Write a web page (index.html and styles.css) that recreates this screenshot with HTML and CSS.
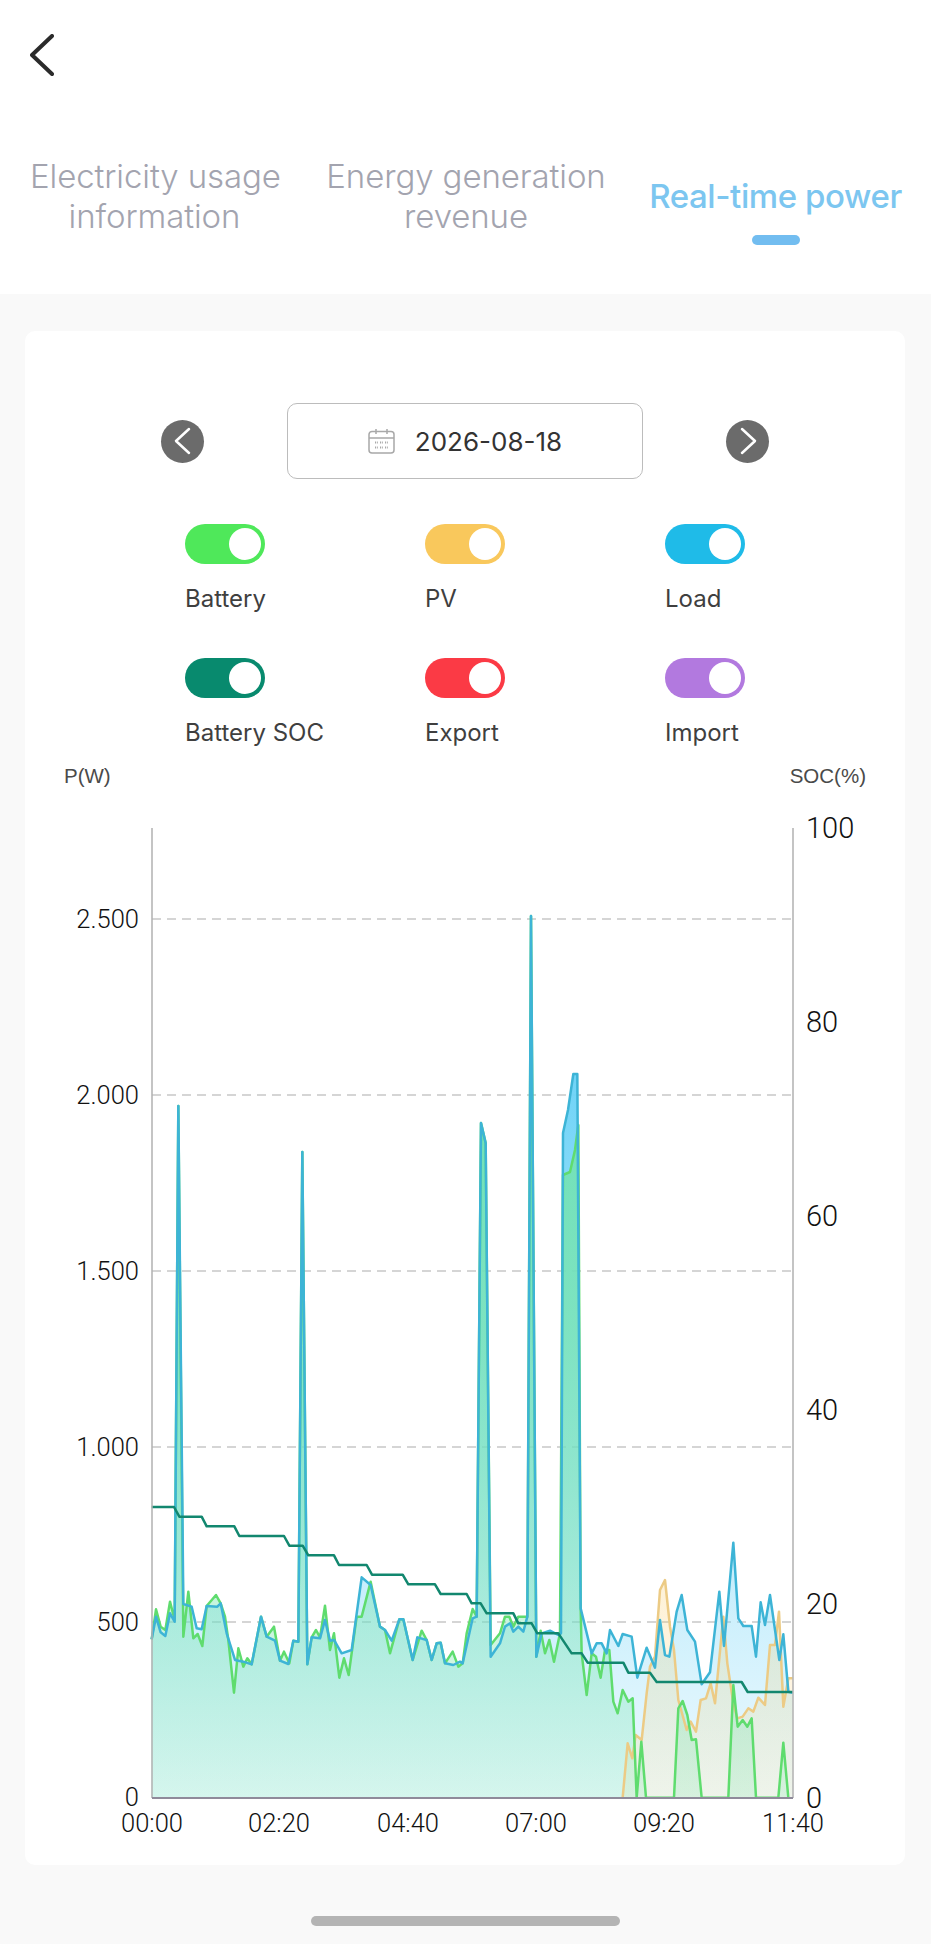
FILE: index.html
```html
<!DOCTYPE html>
<html lang="en">
<head>
  <meta charset="UTF-8" />
  <meta name="viewport" content="width=device-width, initial-scale=1.0" />
  <title>Real-time power</title>
  <link rel="stylesheet" href="styles.css">
</head>
<body>
  <header class="top">
    <a class="back" href="#">
      <svg width="24" height="42" viewBox="0 0 24 42"><path d="M22 2 L2 21 L22 40" /></svg>
    </a>
    <nav class="tabs">
      <div class="tab tab-first">Electricity usage<br>information</div>
      <div class="tab tab-second">Energy generation<br>revenue</div>
      <div class="tab active">Real-time power</div>
    </nav>
  </header>

  <main class="card">
    <div class="date-row">
      <button class="round">
        <svg width="20" height="28" viewBox="0 0 20 28"><path d="M16 2 L3 14 L16 26" /></svg>
      </button>
      <div class="date-box">
        <svg class="cal" width="27" height="26" viewBox="0 0 27 26">
          <rect x="1" y="3.5" width="25" height="21.5" rx="3" />
          <path d="M1 10 H26 M8 1 V6 M19 1 V6" />
          <path class="dots" d="M7 14.5 H10 M12 14.5 H15 M17 14.5 H20 M7 19.5 H10 M12 19.5 H15 M17 19.5 H20" />
        </svg>
        <span>2026-08-18</span>
      </div>
      <button class="round round-next">
        <svg width="20" height="28" viewBox="0 0 20 28"><path d="M4 2 L17 14 L4 26" /></svg>
      </button>
    </div>

    <div class="legend">
      <div class="legend-item"><span class="toggle battery"></span><label>Battery</label></div>
      <div class="legend-item"><span class="toggle pv"></span><label>PV</label></div>
      <div class="legend-item"><span class="toggle load"></span><label>Load</label></div>
      <div class="legend-item"><span class="toggle soc"></span><label>Battery SOC</label></div>
      <div class="legend-item"><span class="toggle export"></span><label>Export</label></div>
      <div class="legend-item"><span class="toggle import"></span><label>Import</label></div>
    </div>

    <div class="axis-titles">
      <span>P(W)</span>
      <span>SOC(%)</span>
    </div>

    <svg class="chart" width="880" height="1050" viewBox="0 0 880 1050">
      <defs>
        <linearGradient id="loadFill" gradientUnits="userSpaceOnUse" x1="0" y1="-1000" x2="0" y2="1193">
          <stop offset="0" stop-color="#6fd3f7" />
          <stop offset="0.8" stop-color="#6fd3f7" stop-opacity="0.3" />
          <stop offset="1" stop-color="#6fd3f7" stop-opacity="0.12" />
        </linearGradient>
        <linearGradient id="pvFill" gradientUnits="userSpaceOnUse" x1="0" y1="500" x2="0" y2="1193">
          <stop offset="0" stop-color="#f9c85c" stop-opacity="0.25" />
          <stop offset="1" stop-color="#f9c85c" stop-opacity="0.12" />
        </linearGradient>
        <linearGradient id="batFill" gradientUnits="userSpaceOnUse" x1="0" y1="-1000" x2="0" y2="1193">
          <stop offset="0" stop-color="#72e4aa" stop-opacity="0.85" />
          <stop offset="0.35" stop-color="#72e4aa" stop-opacity="0.72" />
          <stop offset="0.82" stop-color="#72e4aa" stop-opacity="0.33" />
          <stop offset="1" stop-color="#72e4aa" stop-opacity="0.2" />
        </linearGradient>
      </defs>

      <g class="grid">
        <line x1="127" y1="119" x2="768" y2="119" />
        <line x1="127" y1="295" x2="768" y2="295" />
        <line x1="127" y1="471" x2="768" y2="471" />
        <line x1="127" y1="647" x2="768" y2="647" />
        <line x1="127" y1="822" x2="768" y2="822" />
      </g>

      <!-- traces are in 3x units, origin at 130,1400 of the page -->
      <g transform="translate(105 600) scale(0.33333)">
        <polygon fill="url(#loadFill)" points="65,1193 65,718 78,650 92,697 106,708 120,640 134,665 145,-882 160,612 185,620 200,685 215,688 230,618 262,620 272,610 290,700 315,780 340,785 365,793 393,650 410,710 435,722 450,782 475,792 490,722 505,725 517,-744 532,793 545,712 570,715 585,660 600,722 612,720 635,760 665,750 695,532 722,555 750,680 765,690 785,722 808,658 820,658 848,780 862,712 890,720 905,780 920,730 932,728 945,790 970,795 990,785 998,790 1028,655 1040,650 1053,-831 1067,-771 1082,770 1110,730 1125,680 1140,670 1150,695 1165,680 1180,695 1192,650 1203,-1452 1219,770 1235,700 1260,692 1285,705 1293,700 1299,-801 1314,-870 1330,-978 1342,-978 1352,625 1385,760 1400,730 1415,730 1430,760 1440,690 1465,738 1478,702 1505,710 1522,833 1550,743 1575,803 1590,660 1605,765 1618,770 1640,635 1655,585 1672,690 1695,725 1715,853 1740,817 1768,575 1782,738 1810,428 1825,655 1840,678 1865,678 1878,770 1892,607 1905,675 1920,585 1948,780 1960,703 1975,875 1988,878 1988,1193" />
        <polygon fill="url(#pvFill)" points="1478,1193 1493,1030 1507,1075 1517,1005 1535,1020 1550,880 1560,800 1575,770 1590,570 1605,540 1620,680 1632,750 1645,900 1670,990 1682,965 1698,995 1712,900 1728,895 1742,850 1755,910 1780,650 1792,790 1810,910 1822,955 1838,950 1855,925 1870,935 1885,893 1905,915 1920,735 1935,735 1947,635 1960,920 1975,835 1988,835 1988,1193" />
        <polygon fill="url(#batFill)" points="65,1193 65,718 78,628 92,680 106,690 120,605 134,660 145,-882 160,710 175,575 190,715 203,702 217,738 230,618 258,585 272,610 285,650 295,720 312,878 325,745 340,800 352,775 365,793 393,650 410,710 432,680 450,782 462,755 478,790 490,722 505,725 517,-744 532,793 545,712 558,690 570,712 585,617 600,750 612,700 628,833 642,775 656,825 680,650 695,650 722,545 750,680 765,690 780,760 808,658 820,658 848,780 875,692 890,720 905,780 920,730 932,728 945,790 968,755 985,800 998,790 1010,700 1028,627 1040,650 1053,-831 1067,-771 1082,735 1110,700 1125,650 1138,650 1150,680 1165,650 1180,650 1192,650 1203,-1452 1219,770 1232,692 1245,760 1258,720 1272,785 1290,700 1299,-675 1320,-684 1335,-750 1345,-825 1352,625 1355,760 1370,885 1385,760 1398,770 1412,833 1425,750 1438,750 1450,905 1463,940 1478,870 1495,905 1508,895 1520,1193 1534,1025 1548,1193 1632,1193 1645,925 1658,903 1672,945 1685,1020 1698,1018 1715,1193 1795,1193 1810,855 1823,980 1838,960 1852,980 1865,955 1878,1193 1945,1193 1960,1028 1975,1193 1988,1193" />

        <polyline class="line line-pv" points="1478,1193 1493,1030 1507,1075 1517,1005 1535,1020 1550,880 1560,800 1575,770 1590,570 1605,540 1620,680 1632,750 1645,900 1670,990 1682,965 1698,995 1712,900 1728,895 1742,850 1755,910 1780,650 1792,790 1810,910 1822,955 1838,950 1855,925 1870,935 1885,893 1905,915 1920,735 1935,735 1947,635 1960,920 1975,835 1988,835" />
        <polyline class="line line-battery" points="65,718 78,628 92,680 106,690 120,605 134,660 145,-882 160,710 175,575 190,715 203,702 217,738 230,618 258,585 272,610 285,650 295,720 312,878 325,745 340,800 352,775 365,793 393,650 410,710 432,680 450,782 462,755 478,790 490,722 505,725 517,-744 532,793 545,712 558,690 570,712 585,617 600,750 612,700 628,833 642,775 656,825 680,650 695,650 722,545 750,680 765,690 780,760 808,658 820,658 848,780 875,692 890,720 905,780 920,730 932,728 945,790 968,755 985,800 998,790 1010,700 1028,627 1040,650 1053,-831 1067,-771 1082,735 1110,700 1125,650 1138,650 1150,680 1165,650 1180,650 1192,650 1203,-1452 1219,770 1232,692 1245,760 1258,720 1272,785 1290,700 1299,-675 1320,-684 1335,-750 1345,-825 1352,625 1355,760 1370,885 1385,760 1398,770 1412,833 1425,750 1438,750 1450,905 1463,940 1478,870 1495,905 1508,895 1520,1193 1534,1025 1548,1193 1632,1193 1645,925 1658,903 1672,945 1685,1020 1698,1018 1715,1193 1795,1193 1810,855 1823,980 1838,960 1852,980 1865,955 1878,1193 1945,1193 1960,1028 1975,1193" />
        <polyline class="line line-load" points="65,718 78,650 92,697 106,708 120,640 134,665 145,-882 160,612 185,620 200,685 215,688 230,618 262,620 272,610 290,700 315,780 340,785 365,793 393,650 410,710 435,722 450,782 475,792 490,722 505,725 517,-744 532,793 545,712 570,715 585,660 600,722 612,720 635,760 665,750 695,532 722,555 750,680 765,690 785,722 808,658 820,658 848,780 862,712 890,720 905,780 920,730 932,728 945,790 970,795 990,785 998,790 1028,655 1040,650 1053,-831 1067,-771 1082,770 1110,730 1125,680 1140,670 1150,695 1165,680 1180,695 1192,650 1203,-1452 1219,770 1235,700 1260,692 1285,705 1293,700 1299,-801 1314,-870 1330,-978 1342,-978 1352,625 1385,760 1400,730 1415,730 1430,760 1440,690 1465,738 1478,702 1505,710 1522,833 1550,743 1575,803 1590,660 1605,765 1618,770 1640,635 1655,585 1672,690 1695,725 1715,853 1740,817 1768,575 1782,738 1810,428 1825,655 1840,678 1865,678 1878,770 1892,607 1905,675 1920,585 1948,780 1960,703 1975,875 1988,878" />
        <polyline class="line line-soc" points="65,321 132,321 148,350 215,350 230,379 313,379 328,408 462,408 478,437 518,437 535,466 612,466 627,495 710,495 726,524 818,524 835,553 915,553 932,582 1010,582 1025,610 1052,610 1070,640 1150,640 1165,670 1205,670 1222,700 1285,700 1305,730 1325,760 1355,760 1373,788 1480,788 1495,818 1560,818 1580,846 1835,846 1853,876 1988,876" />
      </g>

      <g class="axis">
        <line x1="127" y1="28" x2="127" y2="998" />
        <line x1="768" y1="28" x2="768" y2="998" />
        <line class="axis-x" x1="127" y1="998" x2="768" y2="998" />
      </g>

      <g class="ticks ticks-left">
        <text x="114" y="128">2.500</text>
        <text x="114" y="304">2.000</text>
        <text x="114" y="480">1.500</text>
        <text x="114" y="656">1.000</text>
        <text x="114" y="831">500</text>
        <text x="114" y="1006">0</text>
      </g>
      <g class="ticks ticks-right">
        <text x="781" y="38">100</text>
        <text x="781" y="232">80</text>
        <text x="781" y="426">60</text>
        <text x="781" y="620">40</text>
        <text x="781" y="814">20</text>
        <text x="781" y="1008">0</text>
      </g>
      <g class="ticks ticks-bottom">
        <text x="127" y="1032">00:00</text>
        <text x="254" y="1032">02:20</text>
        <text x="383" y="1032">04:40</text>
        <text x="511" y="1032">07:00</text>
        <text x="639" y="1032">09:20</text>
        <text x="768" y="1032">11:40</text>
      </g>
    </svg>
  </main>

  <div class="home-bar"></div>
</body>
</html>
```

FILE: styles.css
```css
body {
  font-family: 'Inter', 'Roboto', sans-serif;
  margin: 0;
  background: #f9f9f9;
  color: #3a3a3a;
  min-height: 1944px;
}
.top {
  background: white;
  height: 294px;
  box-sizing: border-box;
  padding: 34px 0 0 30px;
}
.back {
  display: block;
  height: 42px;
  margin-bottom: 80px;
}
.back svg {
  display: block;
}
.back path {
  fill: none;
  stroke: #2b2b2b;
  stroke-width: 4;
  stroke-linecap: round;
  stroke-linejoin: round;
}
.tabs {
  display: flex;
  align-items: center;
  height: 80px;
}
.tab {
  position: relative;
  font-size: 33px;
  font-weight: 300;
  letter-spacing: -0.1px;
  line-height: 40px;
  text-align: center;
  white-space: nowrap;
  color: #a3a4af;
}
.tab-first {
  width: 249px;
  margin-right: 47px;
}
.tab-second {
  width: 280px;
  margin-right: 41px;
}
.tab.active {
  width: 257px;
  font-weight: 500;
  letter-spacing: -0.4px;
  color: #7cc6f0;
}
.tab.active::after {
  content: "";
  position: absolute;
  left: 105px;
  top: 59px;
  width: 48px;
  height: 10px;
  border-radius: 5px;
  background: #72bdf0;
}
.card {
  background: white;
  border-radius: 10px;
  margin: 37px 26px 0 25px;
  padding: 72px 0 15px;
}
.date-row {
  display: flex;
  justify-content: center;
  align-items: center;
  gap: 83px;
}
.round {
  width: 43px;
  height: 43px;
  padding: 0;
  border: none;
  border-radius: 50%;
  background: #6b6b6b;
  display: flex;
  align-items: center;
  justify-content: center;
}
.round path {
  fill: none;
  stroke: white;
  stroke-width: 2.5;
  stroke-linecap: round;
  stroke-linejoin: round;
}
.date-box {
  width: 356px;
  height: 76px;
  box-sizing: border-box;
  border: 1.5px solid #bcbcbc;
  border-radius: 10px;
  display: flex;
  align-items: center;
  justify-content: center;
  gap: 20px;
  font-size: 26px;
  color: #333;
}
.cal {
  fill: none;
  stroke: #a8a8a8;
  stroke-width: 1.5;
}
.cal .dots {
  stroke-width: 2;
  stroke-dasharray: 1.2 1;
}
.legend {
  display: grid;
  grid-template-columns: 240px 240px 240px;
  row-gap: 44px;
  margin: 45px 0 0 160px;
}
.legend-item {
  height: 90px;
}
.legend-item label {
  display: block;
  margin-top: 20px;
  font-size: 24px;
  line-height: 30px;
  color: #3f3f3f;
}
.toggle {
  display: block;
  position: relative;
  width: 80px;
  height: 40px;
  border-radius: 20px;
}
.toggle::after {
  content: "";
  position: absolute;
  right: 4px;
  top: 4px;
  width: 32px;
  height: 32px;
  border-radius: 50%;
  background: white;
}
.battery { background: #4fe85a; }
.pv { background: #f9c85c; }
.load { background: #1fbbe8; }
.soc { background: #088a6e; }
.export { background: #fb3a45; }
.import { background: #b279df; }
.axis-titles {
  display: flex;
  justify-content: space-between;
  margin: 16px 39px 12px;
  font-family: 'Liberation Sans', sans-serif;
  font-size: 20.5px;
  line-height: 24px;
  color: #4a4a4a;
}
.chart {
  display: block;
}
.grid line {
  stroke: #c8c8c8;
  stroke-width: 1.5;
  stroke-dasharray: 9 6;
}
.line {
  fill: none;
  stroke-width: 7.5;
  stroke-linejoin: round;
}
.line-pv { stroke: #eccb85; }
.line-battery { stroke: #5fdc6e; }
.line-load { stroke: #3db4d6; }
.line-soc { stroke: #12876f; }
.axis line {
  stroke: #b0b0b0;
  stroke-width: 1.5;
}
.axis .axis-x {
  stroke: #8f8a9a;
  stroke-width: 2;
}
.ticks text {
  font-family: 'Roboto', sans-serif;
  font-weight: 300;
  fill: #111;
  font-size: 25.5px;
}
.ticks-left text {
  text-anchor: end;
}
.ticks-right text {
  font-size: 29px;
}
.ticks-bottom text {
  text-anchor: middle;
}
.home-bar {
  width: 309px;
  height: 10px;
  margin: 51px auto 0;
  border-radius: 5px;
  background: #b4b4b4;
}
```
